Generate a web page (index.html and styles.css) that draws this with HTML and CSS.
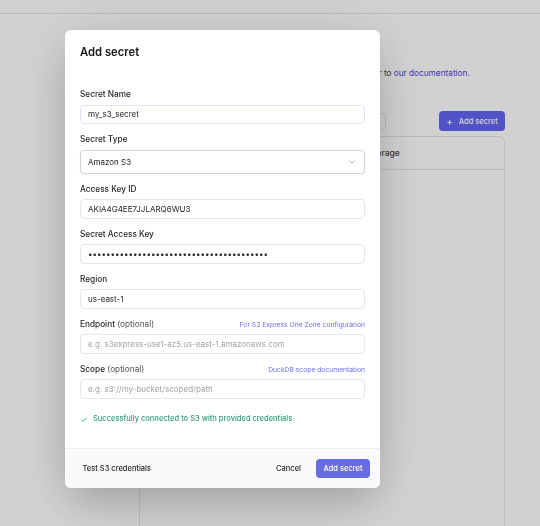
FILE: index.html
```html
<!DOCTYPE html>
<html lang="en">
<head>
<meta charset="utf-8">
<title>Secrets</title>
<link rel="stylesheet" href="styles.css">
</head>
<body>
<div class="page">
  <header class="topbar"></header>
  <main class="content">
    <h1 class="page-title">Secrets</h1>
    <p class="intro">Secrets store cloud credentials securely. For more details, refer to <a class="doc-link">our documentation</a>.</p>
    <div class="toolbar">
      <div class="search">Search secrets</div>
      <button class="add-btn"><span class="plus">+</span>Add secret</button>
    </div>
    <div class="table">
      <div class="thead">
        <span>Name</span><span>Type</span><span>Storage</span>
      </div>
    </div>
  </main>
</div>

<div class="overlay">
  <div class="modal">
    <div class="modal-body">
      <h2 class="modal-title">Add secret</h2>
      <div class="fields">
        <div class="field">
          <label class="label">Secret Name</label>
          <input class="input input-focus" type="text" value="my_s3_secret">
        </div>
        <div class="field">
          <label class="label">Secret Type</label>
          <button class="select" type="button">
            <span>Amazon S3</span>
            <svg class="chev" width="6" height="4" viewBox="0 0 6 4"><path d="M0.6 0.8 L3 3.1 L5.4 0.8" fill="none" stroke="#9ca3af" stroke-width="0.9"/></svg>
          </button>
        </div>
        <div class="field">
          <label class="label">Access Key ID</label>
          <input class="input" type="text" value="AKIA4G4EE7JJLARQ6WU3">
        </div>
        <div class="field">
          <label class="label">Secret Access Key</label>
          <input class="input" type="password" value="abcdefghijabcdefghijabcdefghijabcdefghij">
        </div>
        <div class="field">
          <label class="label">Region</label>
          <input class="input" type="text" value="us-east-1">
        </div>
        <div class="field">
          <div class="label-row">
            <label class="label">Endpoint <span class="opt">(optional)</span></label>
            <a class="hint-link">For S3 Express One Zone configuration</a>
          </div>
          <input class="input" type="text" placeholder="e.g. s3express-use1-az5.us-east-1.amazonaws.com">
        </div>
        <div class="field">
          <div class="label-row">
            <label class="label">Scope <span class="opt">(optional)</span></label>
            <a class="hint-link">DuckDB scope documentation</a>
          </div>
          <input class="input" type="text" placeholder="e.g. s3://my-bucket/scoped/path">
        </div>
      </div>
      <p class="success">
        <svg class="check" width="6" height="5" viewBox="0 0 6 5"><path d="M0.5 2.6 L2.2 4.2 L5.5 0.7" fill="none" stroke="#2f9e80" stroke-width="0.9"/></svg>
        Successfully connected to S3 with provided credentials
      </p>
    </div>
    <div class="modal-footer">
      <button class="ghost" type="button">Test S3 credentials</button>
      <div class="footer-actions">
        <button class="ghost" type="button">Cancel</button>
        <button class="primary" type="button">Add secret</button>
      </div>
    </div>
  </div>
</div>
</body>
</html>
```

FILE: styles.css
```css
* {
  box-sizing: border-box;
  margin: 0;
  padding: 0;
}

html, body {
  height: 100%;
}

body {
  font-family: Inter, "Noto Sans", sans-serif;
  background: #ffffff;
  color: #27272a;
  overflow: hidden;
}

/* ---------- background page ---------- */
.topbar {
  height: 14px;
  border-bottom: 1px solid #e4e4e7;
}

.content {
  margin-left: 135px;
  width: 370px;
  padding-top: 20px;
}

.page-title {
  font-size: 15px;
  font-weight: 600;
  line-height: 20px;
}

.intro {
  margin-top: 13px;
  font-size: 8.25px;
  line-height: 12px;
  color: #3f3f46;
  white-space: nowrap;
}

.doc-link {
  color: #4f46e5;
}

.toolbar {
  margin-top: 32px;
  height: 20px;
  display: flex;
  align-items: center;
  justify-content: space-between;
}

.search {
  width: 251px;
  height: 17px;
  border: 1px solid #dfe3ee;
  border-radius: 4px;
  font-size: 7.5px;
  line-height: 15px;
  padding-left: 7px;
  color: #a1a1aa;
}

.add-btn {
  width: 66px;
  height: 20px;
  border: none;
  border-radius: 4px;
  background: #6366f1;
  color: #ffffff;
  font-family: inherit;
  font-size: 7.5px;
  font-weight: 500;
  display: flex;
  align-items: center;
  justify-content: center;
  gap: 6px;
}

.plus {
  font-size: 10px;
  font-weight: 400;
  line-height: 1;
}

.table {
  margin-top: 5px;
  margin-left: 4px;
  height: 420px;
  border: 1px solid #e4e4e7;
  border-radius: 6px;
}

.thead {
  height: 33px;
  border-bottom: 1px solid #e4e4e7;
  display: grid;
  grid-template-columns: 109px 109px 1fr;
  align-items: center;
  padding-left: 10px;
  font-size: 8.5px;
  font-weight: 500;
  color: #3f3f46;
}

/* ---------- overlay + modal ---------- */
.overlay {
  position: fixed;
  inset: 0;
  background: rgba(0, 0, 0, 0.18);
}

.modal {
  position: absolute;
  left: 65px;
  top: 30px;
  width: 315px;
  background: #ffffff;
  border-radius: 6px;
  overflow: hidden;
  box-shadow: 0 18px 40px -6px rgba(0, 0, 0, 0.22), 0 0 70px rgba(0, 0, 0, 0.08);
}

.modal-body {
  padding: 14px 15px 23px;
}

.modal-title {
  font-size: 11.25px;
  line-height: 16px;
  font-weight: 600;
  color: #18181b;
  margin-bottom: 28px;
}

.fields {
  display: flex;
  flex-direction: column;
  gap: 9px;
}

.field {
  display: flex;
  flex-direction: column;
}

.label-row {
  display: flex;
  justify-content: space-between;
  align-items: baseline;
}

.label {
  display: block;
  font-size: 8.25px;
  line-height: 12px;
  font-weight: 500;
  color: #27272a;
  margin-bottom: 4.5px;
}

.opt {
  font-weight: 400;
  color: #52525b;
}

.hint-link {
  font-size: 6.75px;
  color: #6b6ce8;
}

.input {
  height: 19.5px;
  width: 100%;
  border: 1px solid #e4e7ee;
  border-radius: 4px;
  padding: 0 7px;
  font-family: inherit;
  font-size: 8px;
  color: #27272a;
  background: #ffffff;
  outline: none;
}

.input-focus {
  border-color: #dce4f4;
}

.input::placeholder {
  color: #a1a1aa;
}

.select {
  height: 24px;
  width: 100%;
  border: 1px solid #d4d4d8;
  border-radius: 4px;
  background: #ffffff;
  box-shadow: 0 1px 2px rgba(0, 0, 0, 0.06);
  padding: 0 9px 0 7px;
  display: flex;
  align-items: center;
  justify-content: space-between;
  font-family: inherit;
  font-size: 8px;
  color: #27272a;
  text-align: left;
}

.success {
  margin-top: 14.5px;
  display: flex;
  align-items: center;
  gap: 6px;
  padding-left: 1px;
  font-size: 7.5px;
  line-height: 12px;
  font-weight: 500;
  color: #2f9e80;
}

.modal-footer {
  height: 40px;
  border-top: 1px solid #ececee;
  background: #fafafa;
  padding: 0 10px;
  display: flex;
  align-items: center;
  justify-content: space-between;
}

.footer-actions {
  display: flex;
  align-items: center;
  gap: 7.5px;
}

.ghost {
  border: none;
  background: transparent;
  font-family: inherit;
  font-size: 7.5px;
  font-weight: 500;
  color: #27272a;
  height: 20px;
  padding: 0 7.5px;
}

.primary {
  border: none;
  border-radius: 4px;
  background: #686ce2;
  color: #ffffff;
  font-family: inherit;
  font-size: 7.5px;
  font-weight: 500;
  height: 19.5px;
  padding: 0 7.5px;
}
```
